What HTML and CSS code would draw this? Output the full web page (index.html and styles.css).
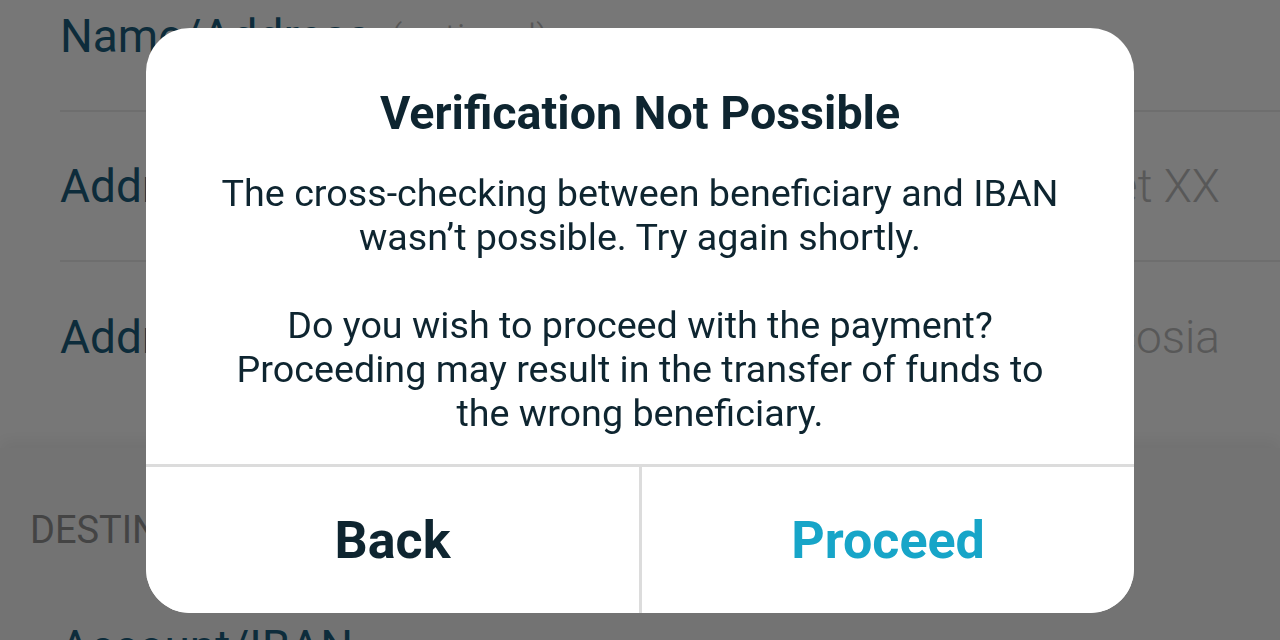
FILE: index.html
```html
<!DOCTYPE html>
<html lang="en">
<head>
<meta charset="utf-8">
<title>Verification Not Possible</title>
<link rel="stylesheet" href="styles.css">
</head>
<body>
  <main class="page">
    <section class="form">
      <div class="row">
        <span class="label">Name/Address <span class="hint">(optional)</span></span>
      </div>
      <div class="row">
        <span class="label">Address</span>
        <span class="value">Street XX</span>
      </div>
      <div class="row row-last">
        <span class="label">Address</span>
        <span class="value">Nicosia</span>
      </div>
    </section>
    <section class="lower">
      <div class="section-title">DESTINATION ACCOUNT</div>
      <div class="row row-plain">
        <span class="label">Account/IBAN</span>
      </div>
    </section>
  </main>

  <div class="overlay"></div>

  <div class="dialog" role="alertdialog" aria-labelledby="dlg-title">
    <div class="dialog-body">
      <h1 class="dialog-title" id="dlg-title">Verification Not Possible</h1>
      <p class="dialog-text">The cross-checking between beneficiary and IBAN<br>wasn’t possible. Try again shortly.<br><br>Do you wish to proceed with the payment?<br>Proceeding may result in the transfer of funds to<br>the wrong beneficiary.</p>
    </div>
    <div class="dialog-actions">
      <button class="btn btn-back" type="button">Back</button>
      <button class="btn btn-proceed" type="button">Proceed</button>
    </div>
  </div>
</body>
</html>
```
FILE: styles.css
```css
* { box-sizing: border-box; }

html, body {
  margin: 0;
  padding: 0;
  width: 1280px;
  height: 640px;
  overflow: hidden;
  font-family: Roboto, "Liberation Sans", sans-serif;
}

.page {
  width: 1280px;
  height: 640px;
  overflow: hidden;
  background: #ffffff;
  display: flex;
  flex-direction: column;
}

.form {
  display: flex;
  flex-direction: column;
  padding: 0 0 0 60px;
  margin-top: -38px;
  flex: none;
}

.row {
  height: 150px;
  flex: none;
  display: flex;
  align-items: center;
  justify-content: space-between;
  padding-right: 60px;
  border-bottom: 2px solid #ececec;
}

.row-last { border-bottom: none; }

.label {
  font-size: 46px;
  font-weight: 400;
  color: #1c5f7e;
  white-space: nowrap;
}

.hint {
  font-size: 38px;
  font-weight: 300;
  color: #b8b8b8;
  margin-left: 8px;
}

.value {
  font-size: 46px;
  font-weight: 300;
  color: #bdbdbd;
}

.lower {
  flex: 1;
  margin-top: 36px;
  background: #f7f7f7;
  box-shadow: 0 -8px 14px rgba(0, 0, 0, 0.05);
  display: flex;
  flex-direction: column;
}

.section-title {
  font-size: 38px;
  font-weight: 400;
  color: #939393;
  padding: 60px 0 0 30px;
  line-height: 44px;
  white-space: nowrap;
}

.row-plain {
  border-bottom: none;
  padding-left: 60px;
  align-items: flex-start;
  padding-top: 68px;
}

.overlay {
  position: fixed;
  inset: 0;
  background: rgba(0, 0, 0, 0.535);
}

.dialog {
  position: fixed;
  left: 146px;
  top: 28px;
  width: 988px;
  height: 585px;
  background: #ffffff;
  border-radius: 44px;
  display: flex;
  flex-direction: column;
  overflow: hidden;
}

.dialog-body {
  flex: 1;
  padding: 57px 30px 0;
  text-align: center;
  color: #0e2530;
}

.dialog-title {
  margin: 0 0 30px;
  font-size: 46.6px;
  line-height: 56px;
  font-weight: 700;
}

.dialog-text {
  margin: 0;
  font-size: 37.7px;
  line-height: 44px;
  font-weight: 400;
}

.dialog-actions {
  height: 149px;
  display: grid;
  grid-template-columns: 496px 1fr;
  border-top: 3px solid #dcdcdc;
}

.btn {
  appearance: none;
  border: none;
  background: #ffffff;
  font-family: Roboto, "Liberation Sans", sans-serif;
  font-size: 52px;
  font-weight: 700;
  display: flex;
  align-items: center;
  justify-content: center;
  padding: 0;
  margin: 0;
}

.btn-back {
  color: #0e2530;
  border-right: 3px solid #dcdcdc;
}

.btn-proceed {
  color: #17a5c8;
}
```
